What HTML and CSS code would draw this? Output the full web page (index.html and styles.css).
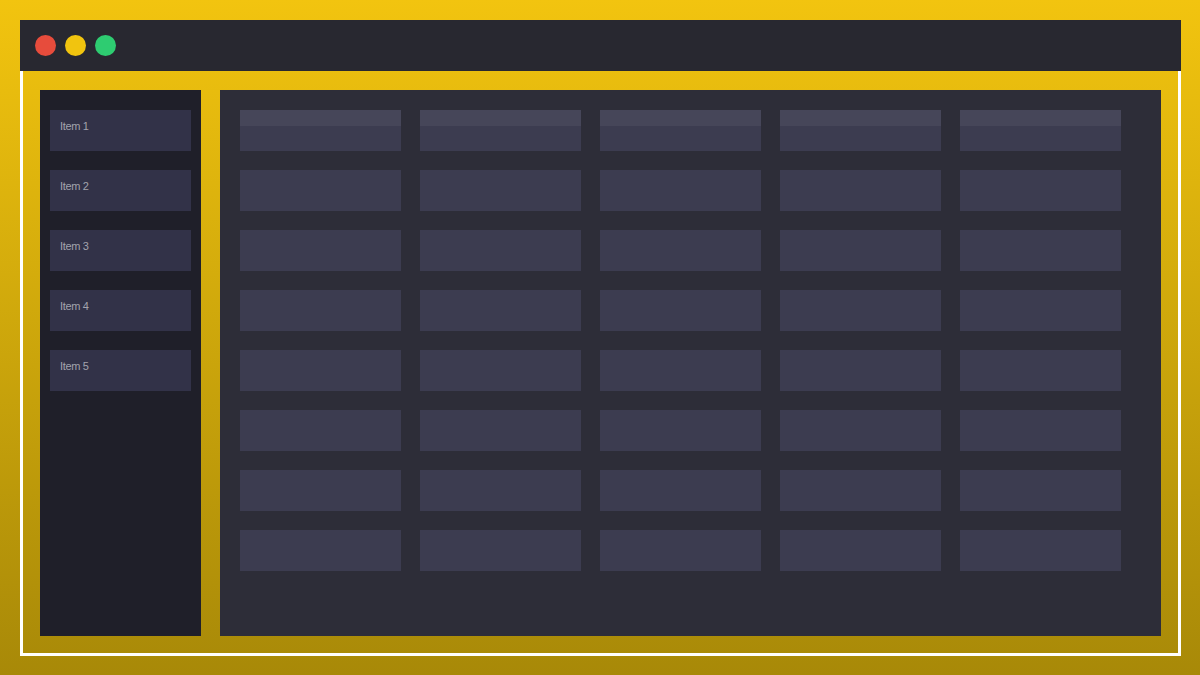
FILE: index.html
```html
<!DOCTYPE html>
<html>
<head>
<meta charset="utf-8">
<link rel="stylesheet" href="styles.css">
</head>
<body>
<div class="window">
  <div class="titlebar">
    <span class="dot red"></span>
    <span class="dot yellow"></span>
    <span class="dot green"></span>
  </div>
  <div class="frame">
    <aside class="sidebar">
      <div class="item">Item 1</div>
      <div class="item">Item 2</div>
      <div class="item">Item 3</div>
      <div class="item">Item 4</div>
      <div class="item">Item 5</div>
    </aside>
    <main class="main">
      <div class="grid">
        <div class="cell head"></div><div class="cell head"></div><div class="cell head"></div><div class="cell head"></div><div class="cell head"></div>
        <div class="cell"></div><div class="cell"></div><div class="cell"></div><div class="cell"></div><div class="cell"></div>
        <div class="cell"></div><div class="cell"></div><div class="cell"></div><div class="cell"></div><div class="cell"></div>
        <div class="cell"></div><div class="cell"></div><div class="cell"></div><div class="cell"></div><div class="cell"></div>
        <div class="cell"></div><div class="cell"></div><div class="cell"></div><div class="cell"></div><div class="cell"></div>
        <div class="cell"></div><div class="cell"></div><div class="cell"></div><div class="cell"></div><div class="cell"></div>
        <div class="cell"></div><div class="cell"></div><div class="cell"></div><div class="cell"></div><div class="cell"></div>
        <div class="cell"></div><div class="cell"></div><div class="cell"></div><div class="cell"></div><div class="cell"></div>
      </div>
    </main>
  </div>
</div>
</body>
</html>
```
FILE: styles.css
```css
html, body {
  margin: 0;
  padding: 0;
  width: 1200px;
  height: 675px;
  overflow: hidden;
}
body {
  background: linear-gradient(to bottom, #f2c40f 0%, #a88908 100%);
  font-family: "Liberation Sans", Arial, sans-serif;
  padding: 20px 19px 19px 20px;
  box-sizing: border-box;
}
.window {
  width: 1161px;
  height: 636px;
  display: flex;
  flex-direction: column;
}
.titlebar {
  height: 51px;
  background: #282830;
  display: flex;
  align-items: center;
  gap: 9px;
  padding-left: 15px;
  flex: none;
}
.dot {
  width: 21px;
  height: 21px;
  border-radius: 50%;
  display: block;
}
.red { background: #e74c3c; }
.yellow { background: #f1c40f; }
.green { background: #2ecc71; }
.frame {
  flex: 1;
  border: 3px solid #ffffff;
  border-top: none;
  display: flex;
  gap: 19px;
  padding: 19px 17px 17px 17px;
}
.sidebar {
  width: 161px;
  background: #1f1f29;
  padding: 20px 10px;
  box-sizing: border-box;
  display: flex;
  flex-direction: column;
  gap: 19px;
}
.item {
  height: 41px;
  background: #323248;
  color: #a3a3ad;
  font-size: 11px;
  letter-spacing: -0.35px;
  line-height: 12px;
  padding: 10px 10px 10px 10px;
  box-sizing: border-box;
}
.main {
  flex: 1;
  background: #2d2d38;
  padding: 20px;
  box-sizing: border-box;
}
.grid {
  display: grid;
  grid-template-columns: repeat(5, 161px);
  grid-auto-rows: 41px;
  column-gap: 19px;
  row-gap: 19px;
}
.cell {
  background: #3c3c50;
}
.cell.head {
  background: linear-gradient(to bottom, #464659 0, #464659 16px, #3c3c50 16px);
}
```
